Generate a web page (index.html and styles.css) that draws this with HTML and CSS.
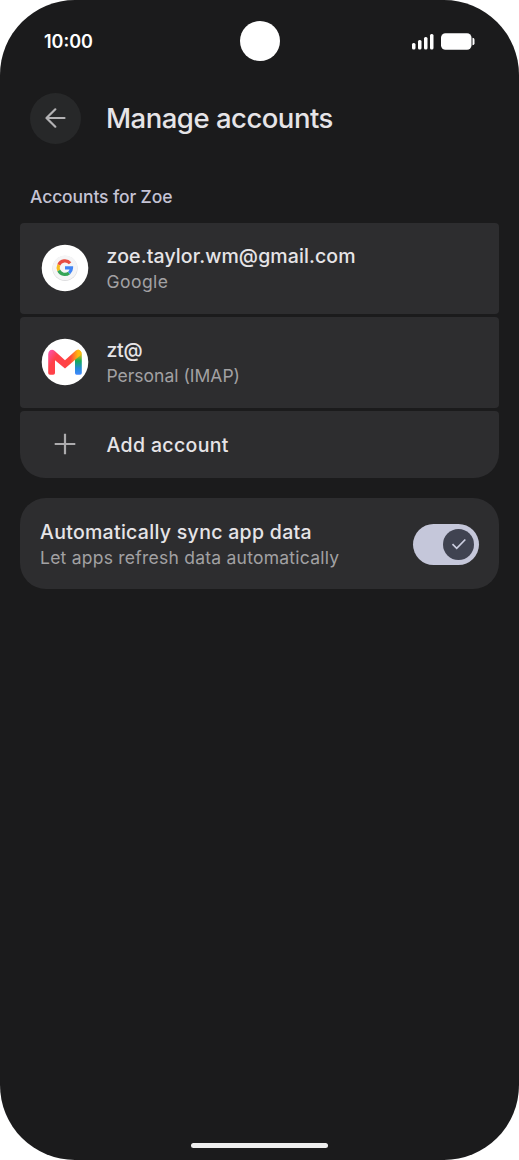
FILE: index.html
```
<!DOCTYPE html>
<html lang="en">
<head>
<meta charset="utf-8">
<title>Manage accounts</title>
<link rel="stylesheet" href="styles.css">
</head>
<body>
<main class="phone">
  <header class="status">
    <span class="t time">10:00</span>
    <span class="camera"></span>
    <svg class="indicators" width="64" height="18" viewBox="0 0 64 18" fill="#fff">
      <rect x="1" y="10" width="3.500" height="6.500" rx="1.500"/>
      <rect x="7" y="7" width="3.500" height="9.500" rx="1.500"/>
      <rect x="13" y="4" width="3.500" height="12.500" rx="1.500"/>
      <rect x="19" y="1" width="3.500" height="15.500" rx="1.500"/>
      <rect x="30" y="0.200" width="30.500" height="16.600" rx="4.500"/>
      <path d="M61.500 4.800q2 0 2 2v3.400q0 2-2 2z"/>
    </svg>
  </header>
  <div class="appbar">
    <button class="back" aria-label="Back">
      <svg width="22" height="22" viewBox="0 0 22 22" fill="none" stroke="#b3b2b4" stroke-width="2.200" stroke-linecap="round" stroke-linejoin="round"><path d="M19.500 11H1.800M10.300 2.300L1.500 11l8.800 8.700"/></svg>
    </button>
    <h1 class="t title">Manage accounts</h1>
  </div>
  <h2 class="t section">Accounts for Zoe</h2>
  <section class="accounts">
    <div class="row">
      <svg class="avatar" width="48" height="48" viewBox="0 0 48 48">
        <circle cx="24" cy="24" r="23.300" fill="#fff"/>
        <circle cx="24" cy="24.400" r="12.600" fill="#dedee0"/>
        <circle cx="24" cy="23.700" r="12.300" fill="#f5f5f6"/>
        <g fill="none" stroke-width="3.200">
          <path d="M29.100 19.200A6.700 6.700 0 0 0 17.800 20.900" stroke="#e84d42"/>
          <path d="M17.800 20.900A6.700 6.700 0 0 0 17.800 26.500" stroke="#f8bd20"/>
          <path d="M17.800 26.500A6.700 6.700 0 0 0 28.100 28.900" stroke="#36a657"/>
          <path d="M28.100 28.900A6.700 6.700 0 0 0 30.500 23.900H24" stroke="#4285f4"/>
        </g>
      </svg>
      <div class="copy"><div class="t name email">zoe.taylor.wm@gmail.com</div><div class="t sub google">Google</div></div>
    </div>
    <div class="row">
      <svg class="avatar" width="48" height="48" viewBox="0 0 48 48">
        <defs>
          <linearGradient id="left" x1="0" y1="0" x2="1" y2="1"><stop offset="0" stop-color="#fa57bb"/><stop offset=".38" stop-color="#ff4149"/></linearGradient>
          <linearGradient id="stem" x1="0" y1="0" x2="0" y2="1"><stop offset="0" stop-color="#ffb611"/><stop offset=".22" stop-color="#d4b51a"/><stop offset=".45" stop-color="#13ad58"/><stop offset=".75" stop-color="#258bd8"/><stop offset="1" stop-color="#4289ff"/></linearGradient>
          <linearGradient id="fold" x1="0" y1="0" x2="1" y2="0"><stop offset="0" stop-color="#ff4145"/><stop offset=".35" stop-color="#ff493b"/><stop offset=".8" stop-color="#ffb80d"/></linearGradient>
        </defs>
        <circle cx="24" cy="24" r="23.300" fill="#fff"/>
        <path d="M34 16.500l3-5q3.800 1 3.800 4.800V35q0 1.800-1.800 1.800h-3.400Q34 36.800 34 35z" fill="url(#stem)"/>
        <path d="M24 22.300L34.500 12.700q2.600-2 4.800.2 2 2.200-.2 4.700L24 30.500z" fill="url(#fold)"/>
        <path d="M24 22.300L13.500 12.700Q11.300 10.900 9 12.300q-1.800 1.300-1.800 4V35q0 1.800 1.800 1.800h3.200q1.800 0 1.800-1.800V22.200l10 8.300z" fill="url(#left)"/>
      </svg>
      <div class="copy"><div class="t name zt">zt@</div><div class="t sub imap">Personal (IMAP)</div></div>
    </div>
    <div class="row add">
      <svg class="avatar" width="48" height="48" viewBox="0 0 48 48" stroke="#acabad" stroke-width="2.200"><path d="M24 13.700v20.600M13.700 24h20.600"/></svg>
      <div class="t name addtext">Add account</div>
    </div>
  </section>
  <section class="sync">
    <div class="copy"><div class="t name auto">Automatically sync app data</div><div class="t sub refresh">Let apps refresh data automatically</div></div>
    <div class="toggle" role="switch" aria-checked="true"><span class="knob"><svg width="16" height="14" viewBox="0 0 16 14" fill="none" stroke="#cccee0" stroke-width="1.700"><path d="M1.500 7.200l4.200 4.200L14.300 2.500"/></svg></span></div>
  </section>
  <div class="home"></div>
</main>
</body>
</html>
```
FILE: styles.css
```
* { box-sizing: border-box; }
body { margin: 0; background: #fff; font-family: Inter, Roboto, sans-serif; }
.phone {
  display: flex;
  flex-direction: column;
  width: 519px;
  height: 1160px;
  padding: 0 20px;
  border-radius: 75px;
  background: #1b1b1c;
  overflow: hidden;
}
.t { margin: 0; white-space: nowrap; }
.status {
  display: grid;
  grid-template-columns: 1fr 40px 1fr;
  align-items: center;
  height: 82px;
  padding: 0 24px;
}
.time { color: #fff; font-size: 18px; font-weight: 600; line-height: 22px; padding-top: 1px; }
.camera { width: 40px; height: 40px; border-radius: 50%; background: #fff; }
.indicators { justify-self: end; margin-top: 1px; }
.appbar { display: flex; align-items: center; height: 72px; padding-left: 10px; gap: 25px; }
.back {
  display: grid;
  place-items: center;
  width: 51px;
  height: 51px;
  padding: 0;
  border: 0;
  border-radius: 50%;
  background: #272829;
}
.title { color: #e6e4e7; font-size: 27.500px; font-weight: 500; line-height: 36px; letter-spacing: -.5px; padding-bottom: 1px; }
.section { margin: 31px 0 14px 10px; color: #c5c3d5; font-size: 17.500px; font-weight: 500; line-height: 24px; letter-spacing: -.12px; }
.accounts { display: flex; flex-direction: column; gap: 3px; }
.row {
  display: flex;
  align-items: center;
  gap: 17.500px;
  height: 91px;
  padding-left: 21px;
  border-radius: 4px;
  background: #2d2d2f;
}
.avatar { margin-top: -1px; }
.row .name { padding-top: 1px; line-height: 25px; }
.add { height: 67px; border-radius: 4px 4px 25px 25px; }
.name { color: #e6e4e7; font-size: 19.500px; font-weight: 500; line-height: 26px; }
.sub { color: #a2a1a3; font-size: 17.500px; line-height: 25px; }
.email { letter-spacing: .11px; }
.google { letter-spacing: .45px; }
.zt { letter-spacing: -.3px; }
.addtext { letter-spacing: .35px; }
.auto { letter-spacing: .3px; }
.refresh { letter-spacing: .24px; }
.sync {
  display: flex;
  align-items: center;
  justify-content: space-between;
  height: 91px;
  margin-top: 20px;
  padding: 1px 20px 0;
  border-radius: 26px;
  background: #2d2d2f;
}
.sync .copy { padding-top: 1px; }
.toggle { display: flex; align-items: center; justify-content: flex-end; width: 66px; height: 41px; padding-right: 5px; border-radius: 21px; background: #c5c7da; }
.knob { display: grid; place-items: center; width: 31px; height: 31px; border-radius: 50%; background: #404351; }
.home { width: 137px; height: 5px; margin: auto auto 12.500px; border-radius: 3px; background: #eee; }
```
